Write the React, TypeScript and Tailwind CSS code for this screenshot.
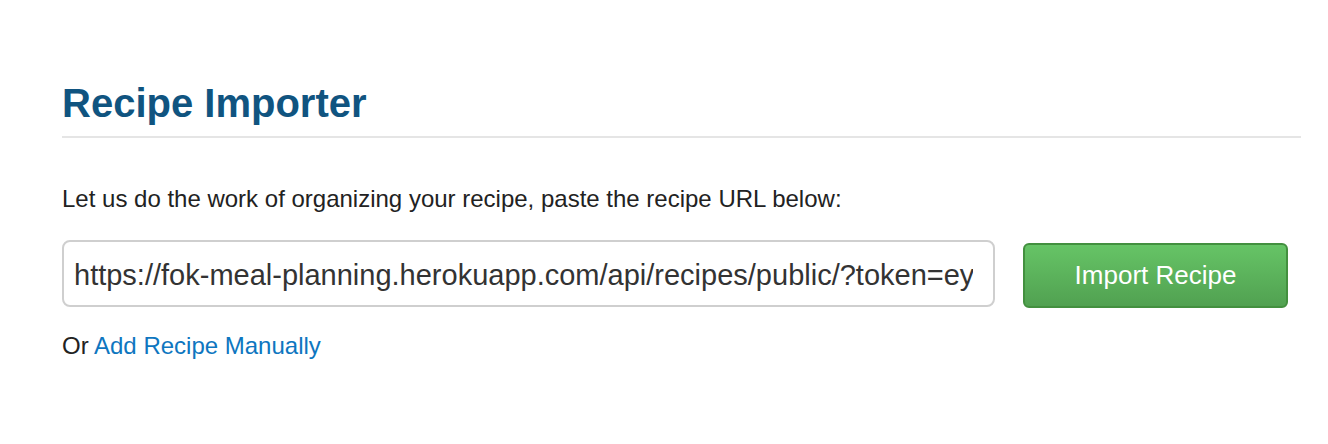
export default function App() {
  return (
    <div className="min-h-screen bg-white font-['Liberation_Sans',Arial,sans-serif]">
      <div className="pl-[62px] pr-[27px] pt-[81px]">
        <h1 className="text-[40px] font-bold leading-[44px] text-[#105480]">
          Recipe Importer
        </h1>
        <div className="mt-[11px] h-[2px] bg-[#e5e5e5]" />
        <p className="mt-[49px] text-[24px] leading-[24px] text-[#222]">
          Let us do the work of organizing your recipe, paste the recipe URL below:
        </p>
        <div className="mt-[29px] flex items-start gap-[28px]">
          <input
            type="text"
            readOnly
            value="https://fok-meal-planning.herokuapp.com/api/recipes/public/?token=eyJhbGciOiJIUzI1NiJ9"
            className="h-[67px] w-[933px] rounded-[8px] border-2 border-[#cfcfcf] pl-[10px] pr-[20px] pt-[4px] text-[29px] text-[#333] outline-none"
          />
          <button
            type="button"
            className="mt-[3px] h-[65px] w-[265px] rounded-[6px] border-2 border-[#43903f] bg-gradient-to-b from-[#66c466] to-[#51a151] text-[26px] text-white"
          >
            Import Recipe
          </button>
        </div>
        <p className="mt-[26px] text-[24px] leading-[24px] text-[#222]">
          Or <a href="#" className="text-[#0e76c0]">Add Recipe Manually</a>
        </p>
      </div>
    </div>
  );
}
